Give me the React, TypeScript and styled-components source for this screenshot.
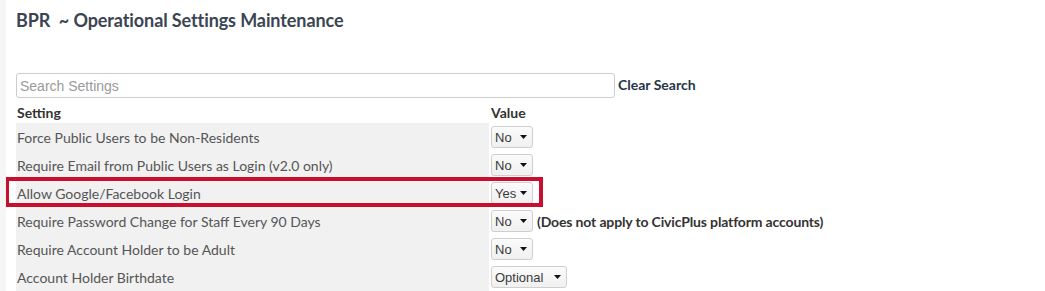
import React from "react";
import styled, { createGlobalStyle } from "styled-components";

const GlobalStyle = createGlobalStyle`
  html, body { margin: 0; padding: 0; background: #ffffff; }
  body { font-family: Lato, "Open Sans", Arial, sans-serif; }
`;

const Page = styled.div`
  min-height: 291px;
  border-left: 6px solid #f5f5f5;
  padding: 8px 0 0 10px;
  box-sizing: border-box;
  overflow: hidden;
`;

const Title = styled.h1`
  margin: 0 0 41px 0;
  font-family: Lato, sans-serif;
  font-size: 18px;
  font-weight: 700;
  line-height: 24px;
  color: #3b4552;
  letter-spacing: -0.1px;
`;

const SearchRow = styled.div`
  display: flex;
  align-items: center;
  height: 25px;
`;

const SearchInput = styled.input`
  width: 599px;
  height: 25px;
  box-sizing: border-box;
  border: 1px solid #cccccc;
  border-radius: 3px;
  padding: 0 3px;
  font-family: "Liberation Sans", Arial, sans-serif;
  font-size: 14px;
  color: #333;
  &::placeholder { color: #9a9a9a; }
`;

const ClearLink = styled.a`
  margin: -3px 0 0 3px;
  font-family: Lato, sans-serif;
  font-size: 14px;
  font-weight: 700;
  color: #253548;
  text-decoration: none;
  cursor: pointer;
`;

const Table = styled.div`
  display: grid;
  grid-template-columns: 473px 1fr;
`;

const HeadCell = styled.div<{ $value?: boolean }>`
  height: 25px;
  padding: 6px 0 0 ${(p) => (p.$value ? "2px" : "1px")};
  box-sizing: border-box;
  font-size: 14px;
  font-weight: 700;
  color: #333;
  line-height: 18px;
`;

const Row = styled.div`
  display: contents;
`;

const LabelCell = styled.div`
  position: relative;
  height: 28px;
  display: flex;
  align-items: center;
  padding: 1px 0 0 1px;
  box-sizing: border-box;
  background: #f1f1f1;
  font-size: 14px;
  color: #555;
`;

const ValueCell = styled.div`
  height: 28px;
  display: flex;
  align-items: center;
  padding-left: 2px;
  gap: 4px;
`;

const Highlight = styled.div`
  position: absolute;
  left: -11px;
  top: -2px;
  width: 538px;
  height: 30px;
  border: 4px solid #c8102e;
  box-sizing: border-box;
  pointer-events: none;
`;

const SelectBox = styled.div<{ $w: number }>`
  width: ${(p) => p.$w}px;
  height: 22px;
  box-sizing: border-box;
  display: flex;
  align-items: center;
  justify-content: space-between;
  padding: 0 5px 0 3px;
  border: 1px solid #cfcfcf;
  border-radius: 3px;
  background: linear-gradient(#fbfbfb, #f0f0f0);
  font-family: "Liberation Sans", Arial, sans-serif;
  font-size: 13px;
  color: #3a3a3a;
`;

const Note = styled.span`
  font-size: 14px;
  font-weight: 700;
  color: #333;
  letter-spacing: -0.15px;
`;

const Caret = () => (
  <svg width="7" height="4" viewBox="0 0 7 4">
    <path d="M0 0 L7 0 L3.5 4 Z" fill="#111" />
  </svg>
);

type Setting = {
  label: string;
  value: string;
  width: number;
  note?: string;
  highlight?: boolean;
};

const settings: Setting[] = [
  { label: "Force Public Users to be Non-Residents", value: "No", width: 42 },
  { label: "Require Email from Public Users as Login (v2.0 only)", value: "No", width: 42 },
  { label: "Allow Google/Facebook Login", value: "Yes", width: 42, highlight: true },
  {
    label: "Require Password Change for Staff Every 90 Days",
    value: "No",
    width: 42,
    note: "(Does not apply to CivicPlus platform accounts)",
  },
  { label: "Require Account Holder to be Adult", value: "No", width: 42 },
  { label: "Account Holder Birthdate", value: "Optional", width: 76 },
];

export default function App() {
  return (
    <>
      <GlobalStyle />
      <Page>
        <Title>BPR&nbsp; ~ Operational Settings Maintenance</Title>
        <SearchRow>
          <SearchInput placeholder="Search Settings" />
          <ClearLink>Clear Search</ClearLink>
        </SearchRow>
        <Table>
          <HeadCell>Setting</HeadCell>
          <HeadCell $value>Value</HeadCell>
          {settings.map((s) => (
            <Row key={s.label}>
              <LabelCell>
                {s.label}
                {s.highlight && <Highlight />}
              </LabelCell>
              <ValueCell>
                <SelectBox $w={s.width}>
                  <span>{s.value}</span>
                  <Caret />
                </SelectBox>
                {s.note && <Note>{s.note}</Note>}
              </ValueCell>
            </Row>
          ))}
        </Table>
      </Page>
    </>
  );
}
